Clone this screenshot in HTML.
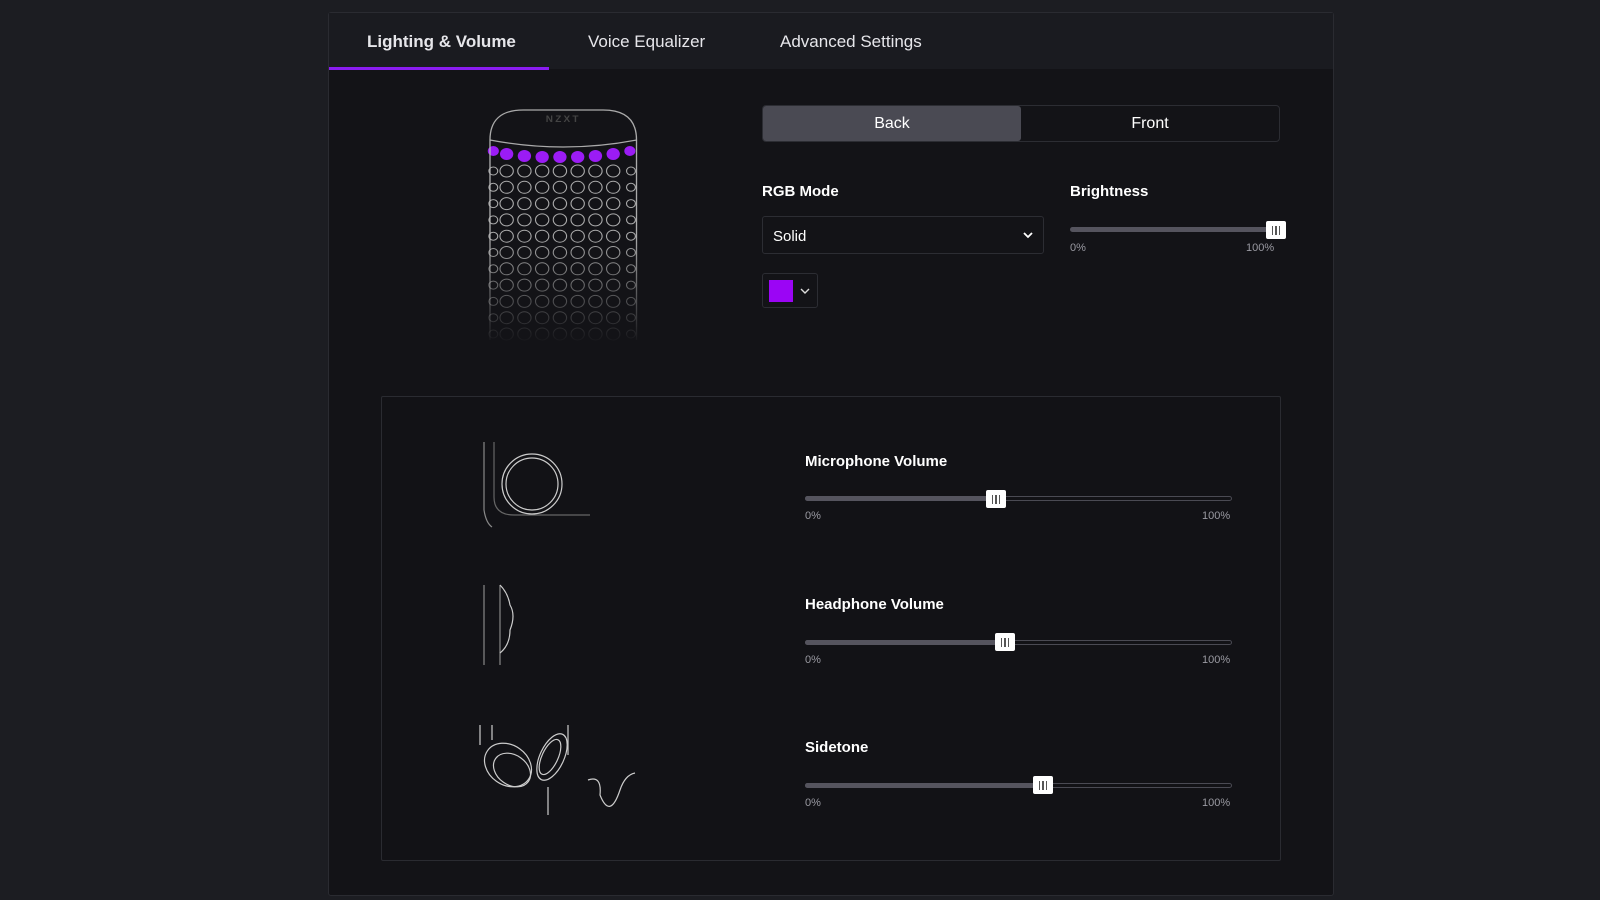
<!DOCTYPE html>
<html><head><meta charset="utf-8"><style>
*{box-sizing:border-box;margin:0;padding:0}
body{width:1600px;height:900px;background:#1c1d22;font-family:"Liberation Sans",sans-serif;color:#fff;position:relative;overflow:hidden}
.panel{position:absolute;left:328px;top:12px;width:1006px;height:884px;background:#131317;border:1px solid #2a2b31;border-radius:3px}
.tabs{position:absolute;left:0;top:0;width:100%;height:56px;background:#1a1b20}
.tab{position:absolute;top:19px;font-size:17px;color:#e6e6ea}
.ul{position:absolute;left:0;top:54px;width:220px;height:3px;background:#8a1cf0}
.abs{position:absolute}
.seg{position:absolute;left:762px;top:105px;width:518px;height:37px;border:1px solid #2c2d33;border-radius:4px}
.seg .b{position:absolute;left:0;top:0;width:258px;height:35px;background:#4a4a53;border-radius:3px;text-align:center;line-height:36px;font-size:16px}
.seg .f{position:absolute;left:258px;top:0;width:258px;height:35px;text-align:center;line-height:36px;font-size:16px}
.lbl{position:absolute;font-size:15px;font-weight:bold}
.sel{position:absolute;left:762px;top:216px;width:282px;height:38px;border:1px solid #2c2d33;border-radius:3px;font-size:15px;padding:11px 10px}
.sw{position:absolute;left:762px;top:273px;width:56px;height:35px;border:1px solid #2c2d33;border-radius:3px}
.pct{position:absolute;font-size:11px;color:#9a9aa2}
.track{position:absolute;height:5px;border:1px solid #4a4a53;border-radius:3px}
.fill{position:absolute;height:5px;background:#55545e;border-radius:3px}
.th{position:absolute;width:20px;height:18px;background:#fff;border-radius:2px;display:flex;justify-content:center;align-items:center;gap:2px}
.th i{display:block;width:1.5px;height:9px;background:#555}
.box{position:absolute;left:381px;top:396px;width:900px;height:465px;border:1px solid #2a2b31;border-radius:2px;background:#121216}
</style></head><body>
<div class="panel">
 <div class="tabs">
  <div class="tab" style="left:38px;font-weight:bold">Lighting &amp; Volume</div>
  <div class="tab" style="left:259px">Voice Equalizer</div>
  <div class="tab" style="left:451px">Advanced Settings</div>
  <div class="ul"></div>
 </div>
</div>
<svg class="abs" style="left:480px;top:104px" width="180" height="240">
 <defs><linearGradient id="g" gradientUnits="userSpaceOnUse" x1="0" y1="60" x2="0" y2="240"><stop offset="0.4" stop-color="#bbb" stop-opacity="0.9"/><stop offset="1" stop-color="#bbb" stop-opacity="0"/></linearGradient></defs>
 <g transform="scale(1.11,1)">
 <path d="M9 36 Q9 6 39 6 H111 Q141 6 141 36" fill="none" stroke="#aaa" stroke-width="1.2"/>
 <path d="M9 36 Q75 50 141 36" fill="none" stroke="#aaa" stroke-width="1.2"/>
 <text x="75" y="18" font-size="9" font-weight="bold" fill="#444" text-anchor="middle" font-family="Liberation Sans" letter-spacing="2">NZXT</text>
 <g fill="#9b1cf5">
  <circle cx="12" cy="47" r="5"/><circle cx="24" cy="50" r="6"/><circle cx="40" cy="52" r="6"/><circle cx="56" cy="53" r="6"/><circle cx="72" cy="53" r="6"/><circle cx="88" cy="53" r="6"/><circle cx="104" cy="52" r="6"/><circle cx="120" cy="50" r="6"/><circle cx="135" cy="47" r="5"/>
 </g>
 <path d="M9 36 V236 M141 36 V236" fill="none" stroke="url(#g)" stroke-width="1.2"/>
 <g fill="none" stroke="url(#g)" stroke-width="1" id="grid"></g>
 </g>
</svg>
<script>
var g=document.getElementById('grid');var s='';
for(var r=0;r<11;r++){for(var c=0;c<9;c++){var x=[12,24,40,56,72,88,104,120,136][c];var y=67+r*16.3;s+='<circle cx="'+x+'" cy="'+y+'" r="'+((c==0||c==8)?4:6)+'"/>';}}
g.innerHTML=s;
</script>
<div class="seg"><div class="b">Back</div><div class="f">Front</div></div>
<div class="lbl" style="left:762px;top:183px">RGB Mode</div>
<div class="sel">Solid<svg class="abs" style="right:10px;top:14px" width="10" height="8"><path d="M1 2 L5 6 L9 2" stroke="#fff" stroke-width="1.8" fill="none"/></svg></div>
<div class="sw"><div class="abs" style="left:6px;top:6px;width:24px;height:22px;background:#9b05f5"></div><svg class="abs" style="left:37px;top:13px" width="10" height="8"><path d="M1 2 L5 6 L9 2" stroke="#ddd" stroke-width="1.4" fill="none"/></svg></div>
<div class="lbl" style="left:1070px;top:183px">Brightness</div>
<div class="fill" style="left:1070px;top:227px;width:205px"></div>
<div class="th" style="left:1266px;top:221px"><i></i><i></i><i></i></div>
<div class="pct" style="left:1070px;top:242px">0%</div><div class="pct" style="left:1246px;top:242px">100%</div>
<div class="box"></div>
<svg class="abs" style="left:470px;top:435px" width="200" height="390" fill="none" stroke="#ccc" stroke-width="1.2">
 <path d="M14 7 V75 Q16 88 22 92" stroke="#888"/><path d="M24 7 V62 Q24 80 44 80 H120" stroke="#666"/>
 <circle cx="62" cy="49" r="30"/><circle cx="62" cy="49" r="26"/>
 <path d="M14 150 V230 M30 150 V230" stroke="#888"/>
 <path d="M30 150 Q38 158 40 170 Q46 180 40 195 Q40 210 30 218"/>
 <ellipse cx="38" cy="330" rx="25" ry="20" transform="rotate(35 38 330)"/>
 <ellipse cx="42" cy="335" rx="20" ry="15" transform="rotate(35 42 335)"/>
 <ellipse cx="82" cy="322" rx="12" ry="25" transform="rotate(25 82 322)"/>
 <ellipse cx="80" cy="322" rx="8" ry="19" transform="rotate(25 80 322)"/>
 <path d="M10 290 V310 M22 290 V305 M98 290 V320 M78 352 V380 M118 345 Q132 340 130 360 Q140 385 150 355 Q155 340 165 338"/>
</svg>
<div class="lbl" style="left:805px;top:453px">Microphone Volume</div>
<div class="lbl" style="left:805px;top:596px">Headphone Volume</div>
<div class="lbl" style="left:805px;top:739px">Sidetone</div>
<div class="track" style="left:805px;top:496px;width:427px"></div><div class="fill" style="left:805px;top:496px;width:190px"></div><div class="th" style="left:986px;top:490px"><i></i><i></i><i></i></div>
<div class="pct" style="left:805px;top:510px">0%</div><div class="pct" style="left:1202px;top:510px">100%</div>
<div class="track" style="left:805px;top:640px;width:427px"></div><div class="fill" style="left:805px;top:640px;width:200px"></div><div class="th" style="left:995px;top:633px"><i></i><i></i><i></i></div>
<div class="pct" style="left:805px;top:654px">0%</div><div class="pct" style="left:1202px;top:654px">100%</div>
<div class="track" style="left:805px;top:783px;width:427px"></div><div class="fill" style="left:805px;top:783px;width:238px"></div><div class="th" style="left:1033px;top:776px"><i></i><i></i><i></i></div>
<div class="pct" style="left:805px;top:797px">0%</div><div class="pct" style="left:1202px;top:797px">100%</div>
</body></html>
